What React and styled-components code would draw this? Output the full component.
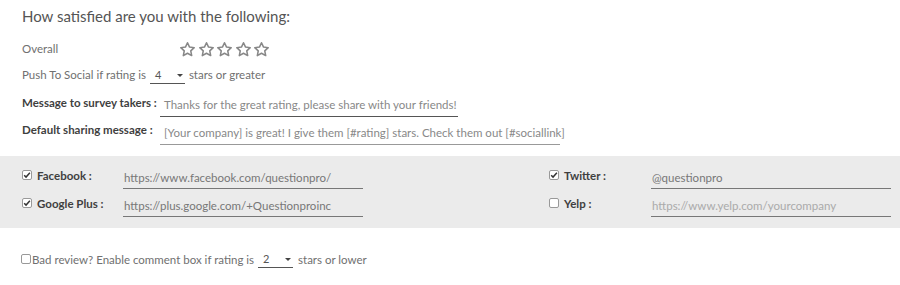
import React from "react";
import styled, { createGlobalStyle } from "styled-components";

const GlobalStyle = createGlobalStyle`
  html, body {
    margin: 0;
    padding: 0;
    background: #fff;
  }
  body {
    font-family: Lato, "Open Sans", sans-serif;
    color: #666;
  }
`;

const Page = styled.div`
  width: 900px;
  height: 285px;
  overflow: hidden;
  font-size: 11.5px;
`;

const Top = styled.div`
  padding: 0 0 0 22px;
`;

const Title = styled.h2`
  margin: 0;
  padding-top: 6px;
  font-size: 15px;
  font-weight: 400;
  color: #555;
  height: 20px;
  line-height: 20px;
`;

const Row = styled.div`
  display: flex;
  align-items: center;
  height: ${(p) => p.h || 27}px;
  margin-top: ${(p) => p.mt || 0}px;
`;

const Label = styled.span`
  color: #707070;
  width: ${(p) => (p.w ? p.w + "px" : "auto")};
  font-weight: ${(p) => (p.bold ? 700 : 400)};
  ${(p) => p.bold && "color: #3f3f3f;"}
  white-space: nowrap;
  flex-shrink: 0;
`;

const Stars = styled.div`
  display: flex;
  gap: 1.5px;
  margin-top: 2px;
`;

const Select = styled.div`
  position: relative;
  display: flex;
  align-items: center;
  width: ${(p) => p.w || 35}px;
  height: 18px;
  margin: 0 4px 0 ${(p) => p.ml || 4}px;
  border-bottom: 1px solid #555;
  color: #555;
  padding-left: 5px;
  box-sizing: border-box;
  font-size: 11px;
`;

const Caret = styled.span`
  position: absolute;
  right: 2px;
  top: 8px;
  width: 0;
  height: 0;
  border-left: 3px solid transparent;
  border-right: 3px solid transparent;
  border-top: 3px solid #444;
`;

const Field = styled.div`
  width: ${(p) => p.w}px;
  height: 22px;
  line-height: 20px;
  margin-top: 8px;
  border-bottom: 1px solid ${(p) => (p.light ? "#999" : "#555")};
  color: #888;
  padding-left: 4px;
  box-sizing: border-box;
  white-space: nowrap;
`;

const Band = styled.div`
  margin-top: 13px;
  background: #ebebeb;
  height: 72px;
  display: grid;
  grid-template-columns: 527px 1fr;
  padding: 5px 0 0 22px;
  box-sizing: border-box;
`;

const SocialCol = styled.div`
  display: flex;
  flex-direction: column;
`;

const SocialRow = styled.div`
  display: flex;
  align-items: center;
  height: 28px;
`;

const SocialLabel = styled.span`
  display: flex;
  align-items: center;
  gap: 5px;
  width: ${(p) => p.w}px;
  font-weight: 700;
  color: #3f3f3f;
  white-space: nowrap;
`;

const SocialInput = styled.div`
  width: 240px;
  height: 22px;
  line-height: 22px;
  margin-top: 6px;
  border-bottom: 1px solid #777;
  color: ${(p) => (p.placeholder ? "#aaa" : "#777")};
  padding-left: 1px;
  box-sizing: border-box;
  white-space: nowrap;
`;

const Box = styled.span`
  display: inline-flex;
  align-items: center;
  justify-content: center;
  width: 10px;
  height: 10px;
  border: 1px solid #999;
  border-radius: 2px;
  background: #fff;
  box-sizing: border-box;
  flex-shrink: 0;
`;

const Bottom = styled.div`
  display: flex;
  align-items: center;
  padding-left: 21px;
  margin-top: 22px;
  color: #707070;
`;

const BottomText = styled.span`
  margin-left: 1px;
  white-space: nowrap;
`;

const Star = () => (
  <svg width="17" height="17" viewBox="0 0 24 24" fill="none" stroke="#888" strokeWidth="2.2" strokeLinejoin="round">
    <path d="M12 2.5l2.9 6.1 6.6.8-4.9 4.6 1.3 6.6L12 17.3l-5.9 3.3 1.3-6.6-4.9-4.6 6.6-.8z" />
  </svg>
);

const Check = ({ on }) => (
  <Box>
    {on && (
      <svg width="8" height="8" viewBox="0 0 10 10">
        <path d="M1.5 5.2l2.3 2.4L8.6 2.2" fill="none" stroke="#333" strokeWidth="1.8" />
      </svg>
    )}
  </Box>
);

const Social = ({ on, label, w, value, placeholder }) => (
  <SocialRow>
    <SocialLabel w={w}>
      <Check on={on} />
      {label}
    </SocialLabel>
    <SocialInput placeholder={placeholder}>{value}</SocialInput>
  </SocialRow>
);

const App = () => (
  <Page>
    <GlobalStyle />
    <Top>
      <Title>How satisfied are you with the following:</Title>
      <Row h={26} mt={9}>
        <Label w={157}>Overall</Label>
        <Stars>
          {[0, 1, 2, 3, 4].map((i) => (
            <Star key={i} />
          ))}
        </Stars>
      </Row>
      <Row h={27}>
        <Label>Push To Social if rating is</Label>
        <Select>
          4
          <Caret />
        </Select>
        <Label>stars or greater</Label>
      </Row>
      <Row h={28}>
        <Label bold w={138}>Message to survey takers :</Label>
        <Field w={298}>
          Thanks for the great rating, please share with your friends!
        </Field>
      </Row>
      <Row h={27}>
        <Label bold w={138}>Default sharing message :</Label>
        <Field w={400} light>
          [Your company] is great! I give them [#rating] stars. Check them out [#sociallink]
        </Field>
      </Row>
    </Top>
    <Band>
      <SocialCol>
        <Social on label="Facebook :" w={101} value="https://www.facebook.com/questionpro/" />
        <Social on label="Google Plus :" w={101} value="https://plus.google.com/+Questionproinc" />
      </SocialCol>
      <SocialCol>
        <Social on label="Twitter :" w={102} value="@questionpro" />
        <Social label="Yelp :" w={102} placeholder value="https://www.yelp.com/yourcompany" />
      </SocialCol>
    </Band>
    <Bottom>
      <Check />
      <BottomText>Bad review? Enable comment box if rating is</BottomText>
      <Select>
        2
        <Caret />
      </Select>
      <BottomText>stars or lower</BottomText>
    </Bottom>
  </Page>
);

export default App;
